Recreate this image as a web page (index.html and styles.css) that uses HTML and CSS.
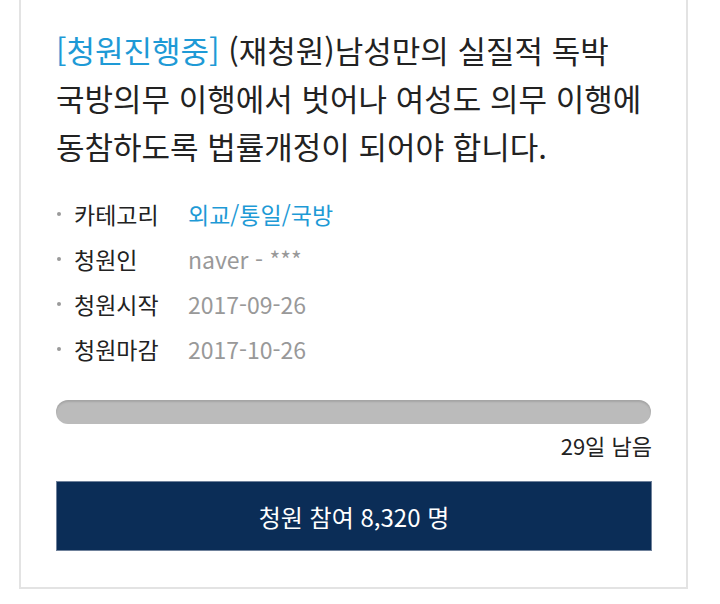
FILE: index.html
```html
<!DOCTYPE html>
<html lang="ko">
<head>
<meta charset="utf-8">
<link rel="stylesheet" href="styles.css">
</head>
<body>
<div class="card">
  <h1 class="title"><span class="status">[청원진행중]</span> (재청원)남성만의 실질적 독박 국방의무 이행에서 벗어나 여성도 의무 이행에 동참하도록 법률개정이 되어야 합니다.</h1>
  <ul class="meta">
    <li class="row"><span class="label">카테고리</span><span class="value link">외교/통일/국방</span></li>
    <li class="row"><span class="label">청원인</span><span class="value">naver - ***</span></li>
    <li class="row"><span class="label">청원시작</span><span class="value">2017-09-26</span></li>
    <li class="row"><span class="label">청원마감</span><span class="value">2017-10-26</span></li>
  </ul>
  <div class="progress"></div>
  <div class="remain">29일 남음</div>
  <button class="join">청원 참여 8,320 명</button>
</div>
</body>
</html>
```
FILE: styles.css
```css
html, body {
  margin: 0;
  padding: 0;
  background: #ffffff;
}
body {
  font-family: "Noto Sans CJK KR", "Noto Sans", sans-serif;
  color: #222222;
}
.card {
  margin-left: 19px;
  width: 596px;
  border: 2px solid #e3e3e3;
  border-top: none;
  padding: 26px 34px 36px 35px;
}
.title {
  margin: 0;
  font-size: 31px;
  line-height: 48px;
  font-weight: 400;
  color: #222222;
  word-break: keep-all;
}
.status {
  color: #1e9ad6;
}
.meta {
  list-style: none;
  margin: 21px 0 0 0;
  padding: 0;
}
.row {
  display: flex;
  align-items: center;
  height: 45px;
  font-size: 23px;
}
.row::before {
  content: "";
  width: 4px;
  height: 4px;
  border-radius: 50%;
  background: #9a9a9a;
  margin: 0 13px 0 1px;
  flex: none;
}
.label {
  width: 114px;
  color: #222222;
}
.value {
  color: #999999;
}
.value.link {
  color: #1e9ad6;
}
.progress {
  margin-top: 29px;
  margin-right: 1px;
  height: 24px;
  border-radius: 12px;
  background: #bbbbbb;
  box-shadow: inset 0 2px 2px rgba(0,0,0,0.12);
}
.remain {
  margin-top: 6px;
  text-align: right;
  font-size: 22px;
  line-height: 30px;
  color: #222222;
}
.join {
  display: block;
  width: 100%;
  margin-top: 21px;
  height: 70px;
  background: #0b2d57;
  border: 1px solid #6f819b;
  color: #ffffff;
  font-family: inherit;
  font-size: 24px;
  padding: 0;
}
```
